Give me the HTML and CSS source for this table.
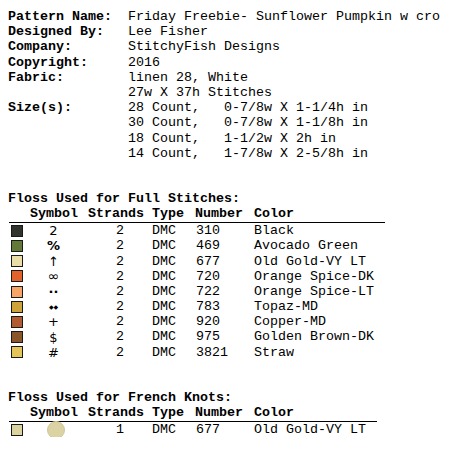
FILE: index.html
```html
<!DOCTYPE html>
<html>
<head>
<meta charset="utf-8">
<link rel="stylesheet" href="styles.css">
</head>
<body>
<div class="page">
  <div class="info">
    <div class="label">Pattern Name:</div><div class="val">Friday Freebie- Sunflower Pumpkin w cro</div>
    <div class="label">Designed By:</div><div class="val">Lee Fisher</div>
    <div class="label">Company:</div><div class="val">StitchyFish Designs</div>
    <div class="label">Copyright:</div><div class="val">2016</div>
    <div class="label">Fabric:</div><div class="val">linen 28, White</div>
    <div class="label"></div><div class="val">27w X 37h Stitches</div>
    <div class="label">Size(s):</div><div class="val">28 Count,   0-7/8w X 1-1/4h in</div>
    <div class="label"></div><div class="val">30 Count,   0-7/8w X 1-1/8h in</div>
    <div class="label"></div><div class="val">18 Count,   1-1/2w X 2h in</div>
    <div class="label"></div><div class="val">14 Count,   1-7/8w X 2-5/8h in</div>
  </div>

  <div class="section-title">Floss Used for Full Stitches:</div>
  <div class="floss">
    <div class="h"></div><div class="h h-sym">Symbol</div><div class="h">Strands</div><div class="h">Type</div><div class="h">Number</div><div class="h h-color">Color</div>

    <div class="c"><span class="sw c310"></span></div><div class="c sym">2</div><div class="c str">2</div><div class="c">DMC</div><div class="c num">310</div><div class="c col">Black</div>
    <div class="c"><span class="sw c469"></span></div><div class="c sym bold">%</div><div class="c str">2</div><div class="c">DMC</div><div class="c num">469</div><div class="c col">Avocado Green</div>
    <div class="c"><span class="sw c677"></span></div><div class="c sym">↑</div><div class="c str">2</div><div class="c">DMC</div><div class="c num">677</div><div class="c col">Old Gold-VY LT</div>
    <div class="c"><span class="sw c720"></span></div><div class="c sym wide">∞</div><div class="c str">2</div><div class="c">DMC</div><div class="c num">720</div><div class="c col">Orange Spice-DK</div>
    <div class="c"><span class="sw c722"></span></div><div class="c sym bold">··</div><div class="c str">2</div><div class="c">DMC</div><div class="c num">722</div><div class="c col">Orange Spice-LT</div>
    <div class="c"><span class="sw c783"></span></div><div class="c sym tiny">◆◆</div><div class="c str">2</div><div class="c">DMC</div><div class="c num">783</div><div class="c col">Topaz-MD</div>
    <div class="c"><span class="sw c920"></span></div><div class="c sym">+</div><div class="c str">2</div><div class="c">DMC</div><div class="c num">920</div><div class="c col">Copper-MD</div>
    <div class="c"><span class="sw c975"></span></div><div class="c sym">$</div><div class="c str">2</div><div class="c">DMC</div><div class="c num">975</div><div class="c col">Golden Brown-DK</div>
    <div class="c"><span class="sw c3821"></span></div><div class="c sym">#</div><div class="c str">2</div><div class="c">DMC</div><div class="c num">3821</div><div class="c col">Straw</div>
  </div>

  <div class="section-title">Floss Used for French Knots:</div>
  <div class="floss">
    <div class="h"></div><div class="h h-sym">Symbol</div><div class="h">Strands</div><div class="h">Type</div><div class="h">Number</div><div class="h h-color">Color</div>

    <div class="c"><span class="sw knot-sw"></span></div><div class="c knot-cell"><span class="knot"></span></div><div class="c str">1</div><div class="c">DMC</div><div class="c num">677</div><div class="c col">Old Gold-VY LT</div>
  </div>
</div>
</body>
</html>
```

FILE: styles.css
```css
html, body {
  margin: 0;
  padding: 0;
  background: #ffffff;
}

body {
  font-family: "Liberation Mono", "Courier New", monospace;
  font-size: 13.333px;
  line-height: 15.2px;
  color: #000000;
}

.page {
  padding: 9px 8px 0 8px;
}

.info {
  display: grid;
  grid-template-columns: 120px auto;
}

.label {
  font-weight: bold;
  height: 15.2px;
}

.val {
  white-space: pre;
  height: 15.2px;
}

.section-title {
  font-weight: bold;
  margin-top: 30.4px;
}

.floss {
  display: grid;
  width: max-content;
  margin-left: 1px;
  grid-template-columns: 14px 65px 64px 43px 59px auto;
}

.h {
  font-weight: bold;
  border-bottom: 1px solid #000000;
  height: 15.2px;
  padding-bottom: 0.5px;
}

.h-sym {
  padding-left: 7px;
}

.h-color {
  padding-right: 11px;
}

.c {
  height: 15.2px;
  display: flex;
  align-items: center;
  white-space: pre;
}

.sym {
  justify-content: center;
  padding-right: 4px;
  font-family: "DejaVu Sans", sans-serif;
  font-size: 13px;
  line-height: 13px;
}

.sym.bold {
  font-weight: bold;
}

.sym.wide {
  font-size: 14px;
  line-height: 13px;
}

.sym.tiny {
  font-size: 6px;
  line-height: 6px;
}

.str {
  justify-content: center;
}

.num {
  padding-left: 1px;
}

.col {
  padding-right: 11px;
}

.sw {
  display: block;
  width: 10px;
  height: 10px;
  margin-left: 2px;
  border: 1px solid #1a1a1a;
}

.c310 { background: #30342c; }
.c469 { background: #62793a; }
.c677 { background: #e9dea8; }
.c720 { background: #e2622c; }
.c722 { background: #f6a566; }
.c783 { background: #d0a33a; }
.c920 { background: #b25b30; }
.c975 { background: #8a5528; }
.c3821 { background: #e6c558; }
.knot-sw { background: #dcd49e; }

.knot-cell {
  justify-content: center;
}

.knot {
  display: block;
  width: 16px;
  height: 16px;
  margin: -1px 0;
  border-radius: 50%;
  background: #dcd3a5;
  border: 0.5px solid #cfc69a;
}
```
